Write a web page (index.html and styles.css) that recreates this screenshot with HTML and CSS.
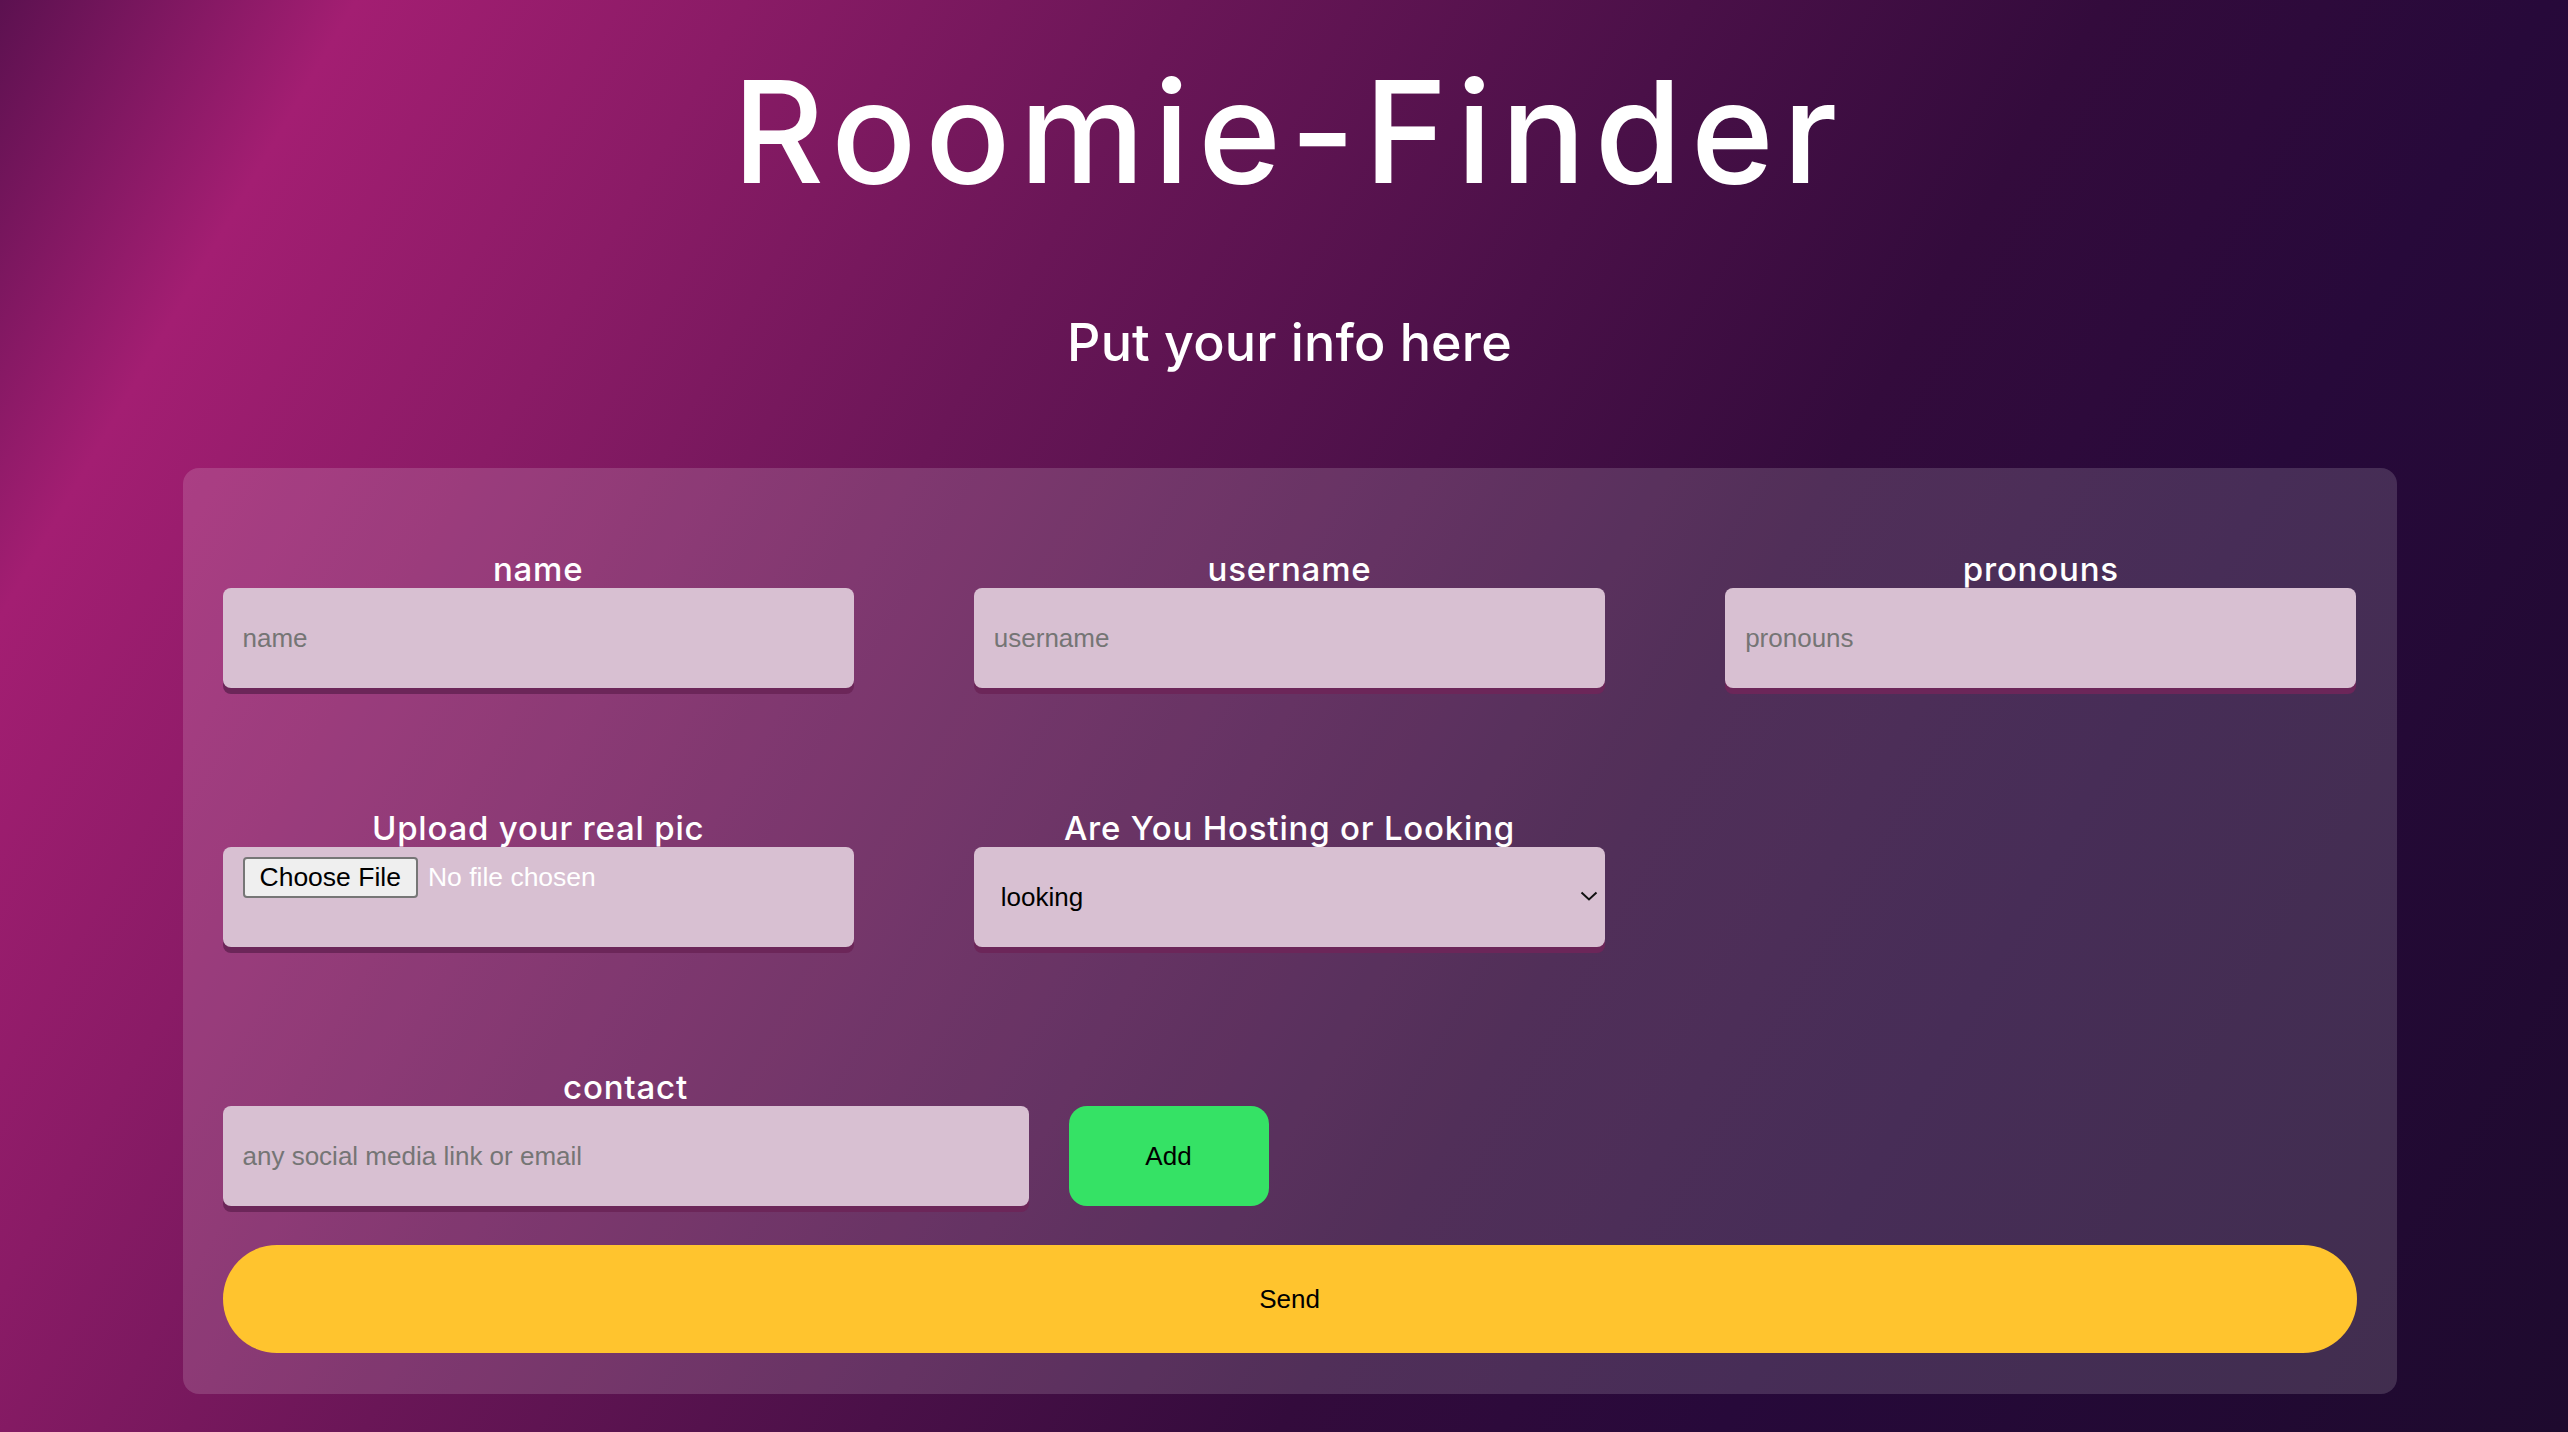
FILE: index.html
```html
<!DOCTYPE html>
<html lang="en">
<head>
<meta charset="utf-8">
<title>Roomie-Finder</title>
<link rel="stylesheet" href="styles.css">
</head>
<body>
  <header class="header">
    <h1 class="title">Roomie-Finder</h1>
    <h2 class="subtitle">Put your info here</h2>
  </header>
  <form class="card">
    <div class="row row-3">
      <div class="field">
        <label class="label" for="name">name</label>
        <input class="input" id="name" type="text" placeholder="name">
      </div>
      <div class="field">
        <label class="label" for="username">username</label>
        <input class="input" id="username" type="text" placeholder="username">
      </div>
      <div class="field">
        <label class="label" for="pronouns">pronouns</label>
        <input class="input" id="pronouns" type="text" placeholder="pronouns">
      </div>
    </div>
    <div class="row row-3">
      <div class="field">
        <label class="label" for="pic">Upload your real pic</label>
        <div class="input file-box">
          <span class="file-btn">Choose File</span>
          <span class="file-text">No file chosen</span>
        </div>
      </div>
      <div class="field">
        <label class="label" for="host">Are You Hosting or Looking</label>
        <div class="select-wrap">
          <select class="input select" id="host">
            <option>looking</option>
            <option>hosting</option>
          </select>
          <svg class="chevron" width="18" height="10" viewBox="0 0 18 10"><path d="M1.5 1.5 L9 8.5 L16.5 1.5" fill="none" stroke="#111" stroke-width="2"/></svg>
        </div>
      </div>
    </div>
    <div class="row row-contact">
      <div class="field contact">
        <label class="label" for="contact">contact</label>
        <input class="input" id="contact" type="text" placeholder="any social media link or email">
      </div>
      <button class="add" type="button">Add</button>
    </div>
    <button class="send" type="button">Send</button>
  </form>
</body>
</html>
```

FILE: styles.css
```css
html, body {
  margin: 0;
  padding: 0;
}

body {
  min-height: 100vh;
  box-sizing: border-box;
  padding-left: 11px;
  font-family: Inter, "Liberation Sans", sans-serif;
  color: #fff;
  background: linear-gradient(120deg, #5c1150 0%, #a31e72 10.5%, #8a1b66 22%, #6a1657 35%, #4a1048 50%, #330b3c 62%, #27093a 75%, #1e0a2e 100%);
  background-attachment: fixed;
  overflow: hidden;
}

.header {
  text-align: center;
}

.title {
  margin: 0;
  padding-top: 40px;
  font-size: 141px;
  font-weight: 500;
  line-height: 184px;
  letter-spacing: 9px;
}

.subtitle {
  margin: 0;
  padding-top: 88px;
  font-size: 52px;
  font-weight: 500;
  line-height: 62px;
  letter-spacing: 0.2px;
}

.card {
  box-sizing: border-box;
  width: 2214px;
  margin: 94px auto 0;
  padding: 82px 40px 41px;
  border-radius: 16px;
  background: rgba(255, 255, 255, 0.15);
}

.row {
  margin-bottom: 121px;
}

.row-3 {
  display: grid;
  grid-template-columns: repeat(3, 1fr);
  column-gap: 120px;
}

.row-contact {
  display: flex;
  align-items: flex-end;
  margin-bottom: 39px;
}

.field {
  display: flex;
  flex-direction: column;
}

.contact {
  width: 806px;
}

.label {
  text-align: center;
  font-size: 33px;
  font-weight: 550;
  line-height: 38px;
  letter-spacing: 0.8px;
}

.input {
  box-sizing: border-box;
  height: 100px;
  width: 100%;
  padding: 0 20px;
  border: none;
  border-radius: 8px;
  background: #d8c0d2;
  box-shadow: 0 6px 0 #6c2659;
  font-family: "Liberation Sans", Arial, sans-serif;
  font-size: 26px;
  color: #000;
  outline: none;
}

.input::placeholder {
  color: #757575;
  opacity: 1;
}

.file-box {
  display: flex;
  align-items: flex-start;
  padding-top: 10px;
  gap: 10px;
}

.file-btn {
  box-sizing: border-box;
  height: 41px;
  padding: 0 15px;
  border: 2px solid #767676;
  border-radius: 4px;
  background: #efefef;
  color: #000;
  font-size: 26.5px;
  line-height: 37px;
}

.file-text {
  color: #fff;
  font-size: 26.5px;
  line-height: 41px;
}

.select-wrap {
  position: relative;
}

.select {
  appearance: none;
  -webkit-appearance: none;
  padding-left: 27px;
}

.chevron {
  position: absolute;
  right: 7px;
  top: 44px;
  pointer-events: none;
}

.add {
  width: 200px;
  height: 100px;
  margin-left: 40px;
  border: none;
  border-radius: 18px;
  background: #35e265;
  color: #000;
  font-family: "Liberation Sans", Arial, sans-serif;
  font-size: 26px;
}

.send {
  display: block;
  width: 100%;
  height: 108px;
  border: none;
  border-radius: 54px;
  background: #ffc42e;
  color: #000;
  font-family: "Liberation Sans", Arial, sans-serif;
  font-size: 26px;
}
```
